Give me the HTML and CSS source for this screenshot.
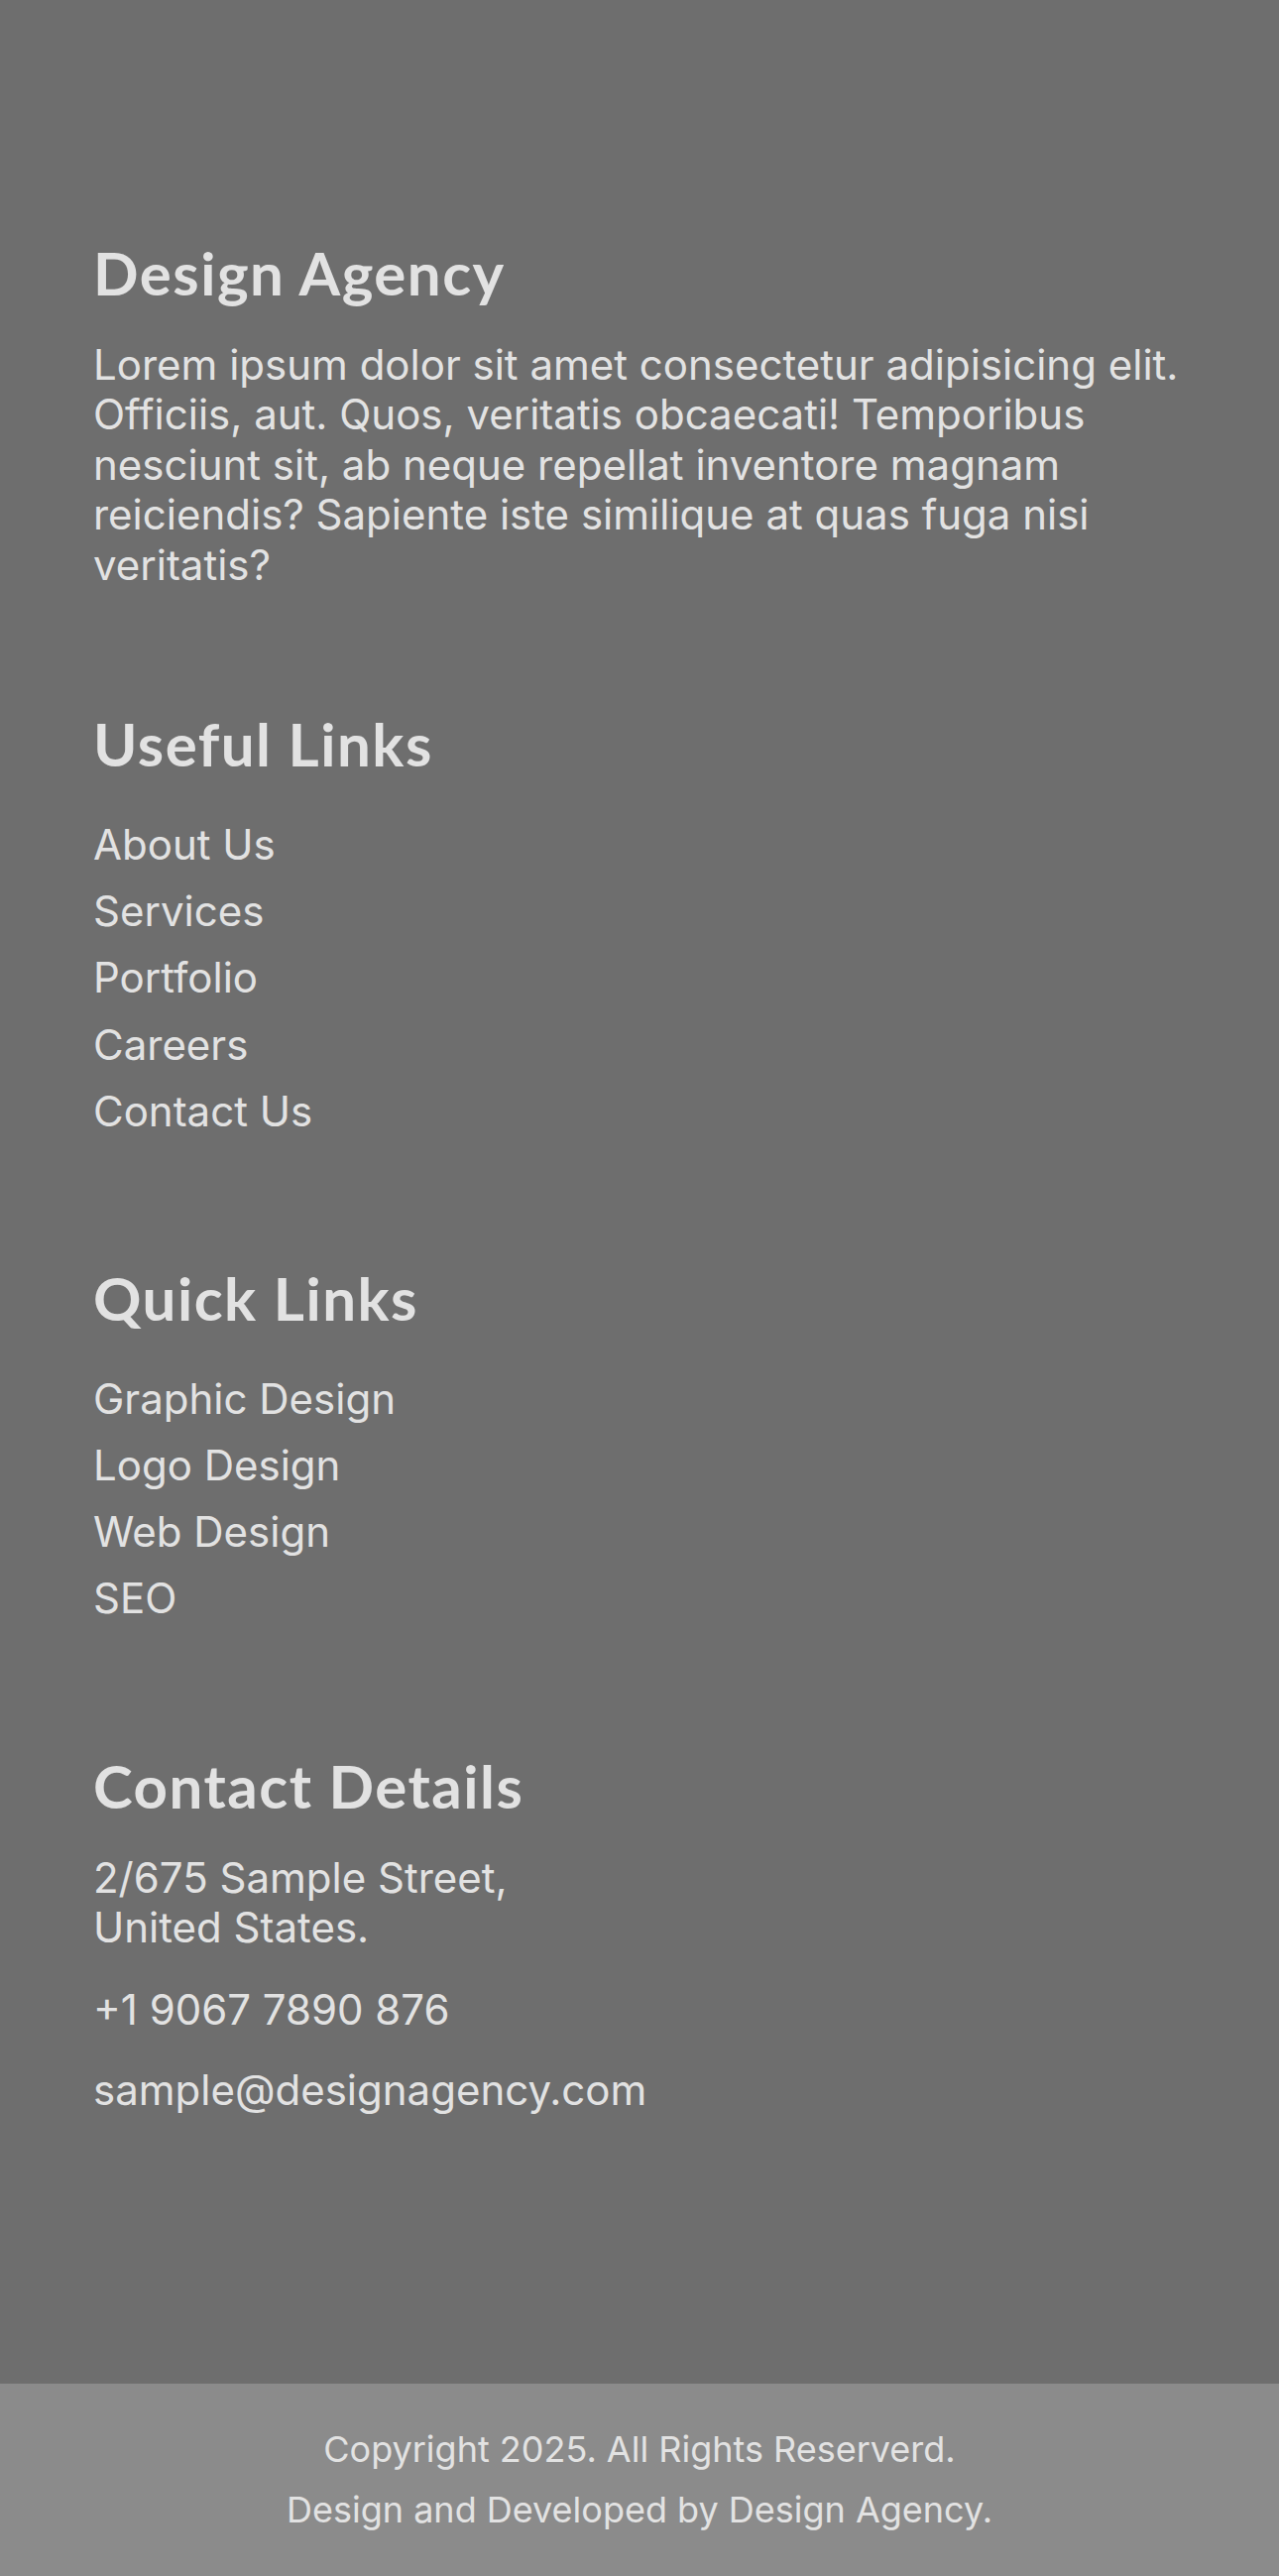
FILE: index.html
```html
<!DOCTYPE html>
<html lang="en">
<head>
  <meta charset="UTF-8" />
  <meta name="viewport" content="width=device-width, initial-scale=1.0" />
  <title>Design Agency Footer</title>
  <link rel="stylesheet" href="styles.css">
</head>
<body>
  <footer class="site-footer">
    <div class="footer-main">
      <div class="footer-col">
        <h2>Design Agency</h2>
        <p class="footer-text">
          Lorem ipsum dolor sit amet consectetur adipisicing elit. Officiis, aut. Quos, veritatis obcaecati! Temporibus nesciunt sit, ab neque repellat inventore magnam reiciendis? Sapiente iste similique at quas fuga nisi veritatis?
        </p>
      </div>

      <div class="footer-col">
        <h2>Useful Links</h2>
        <ul class="footer-links">
          <li><a href="#">About Us</a></li>
          <li><a href="#">Services</a></li>
          <li><a href="#">Portfolio</a></li>
          <li><a href="#">Careers</a></li>
          <li><a href="#">Contact Us</a></li>
        </ul>
      </div>

      <div class="footer-col">
        <h2>Quick Links</h2>
        <ul class="footer-links">
          <li><a href="#">Graphic Design</a></li>
          <li><a href="#">Logo Design</a></li>
          <li><a href="#">Web Design</a></li>
          <li><a href="#">SEO</a></li>
        </ul>
      </div>

      <div class="footer-col">
        <h2>Contact Details</h2>
        <div class="contact-list">
          <p class="address">2/675 Sample Street,<br>United States.</p>
          <p>+1 9067 7890 876</p>
          <p>sample@designagency.com</p>
        </div>
      </div>
    </div>

    <div class="footer-bottom">
      <p>Copyright 2025. All Rights Reserverd.</p>
      <p>Design and Developed by Design Agency.</p>
    </div>
  </footer>
</body>
</html>
```

FILE: styles.css
```css
body {
  margin: 0;
  background: #6e6e6e;
  font-family: 'Inter', 'Liberation Sans', sans-serif;
  color: #e2e2e2;
}

.site-footer {
  display: flex;
  flex-direction: column;
  min-height: 100vh;
}

.footer-main {
  flex: 1;
  display: flex;
  flex-direction: column;
  gap: 120px;
  padding: 240px 96px 120px 94px;
}

.footer-col h2 {
  font-family: 'Lato', 'Open Sans', sans-serif;
  font-weight: 700;
  font-size: 60px;
  line-height: 70px;
  letter-spacing: 1.5px;
  margin: 0 0 33px;
}

.footer-text {
  font-size: 42px;
  line-height: 1.2;
  margin: 4px 0 0;
}

.footer-links {
  list-style: none;
  margin: 0;
  padding: 0;
}

.footer-links li {
  font-size: 42px;
  line-height: 1.6;
}

.footer-links a {
  color: #e2e2e2;
  text-decoration: none;
}

.contact-list {
  display: flex;
  flex-direction: column;
  gap: 30px;
  margin-top: 4px;
}

.contact-list p {
  font-size: 42px;
  line-height: 1.2;
  margin: 0;
}

.contact-list .address {
  margin-bottom: 3px;
}

.footer-bottom {
  background: #8b8b8b;
  padding: 36px 20px;
  text-align: center;
}

.footer-bottom p {
  font-size: 36px;
  line-height: 1.7;
  margin: 0;
}
```
